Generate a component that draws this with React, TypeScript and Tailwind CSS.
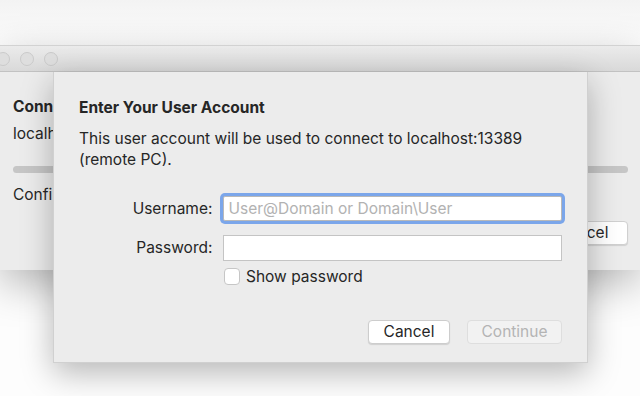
import React from 'react';

const font = { fontFamily: 'Inter, "Noto Sans", sans-serif' };

const Light: React.FC = () => (
  <span className="block w-[14px] h-[14px] rounded-full bg-[#dedede] border border-[#cacaca]" />
);

const App: React.FC = () => {
  return (
    <div
      className="relative w-[640px] h-[396px] overflow-hidden bg-[#fdfdfd] text-[15.5px] text-[#262626]"
      style={font}
    >
      <div className="h-[45px] bg-gradient-to-b from-[#f3f3f3] to-[#fdfdfd]" />

      {/* background window, mostly hidden by the sheet */}
      <div className="shadow-[0_14px_40px_rgba(0,0,0,0.28)]">
        <div className="h-[27px] flex items-center bg-gradient-to-b from-[#ebebeb] to-[#d9d9d9] border-t border-[#d2d2d2] border-b border-b-[#c2c2c2]">
          <div className="flex gap-[10px] -ml-[4px]">
            <Light />
            <Light />
            <Light />
          </div>
        </div>
        <div className="h-[198px] bg-[#ececec] pt-[25px] pl-[13px] pr-[12px] flex flex-col">
          <div className="font-bold leading-[20px]">Conn</div>
          <div className="leading-[20px] mt-[7px]">localh</div>
          <div className="mt-[22px] h-[7px] rounded-full bg-[#c6c6c6]" />
          <div className="leading-[20px] mt-[12px]">Confi</div>
          <div className="flex justify-end mt-[16px]">
            <div className="h-[24px] w-[90px] rounded-[4px] bg-white border border-[#d0d0d0] shadow-[0_1px_1px_rgba(0,0,0,0.12)] flex items-center justify-center">
              Cancel
            </div>
          </div>
        </div>
      </div>

      {/* sheet */}
      <div className="absolute left-[53px] top-[72px] w-[535px] h-[291px] bg-[#ececec] border-x border-b border-[#d0d0d0] shadow-[0_10px_30px_rgba(0,0,0,0.28)] px-[25px] pt-[26px] flex flex-col">
        <div className="font-bold leading-[20px]">Enter Your User Account</div>
        <div className="mt-[10px] leading-[21px]">
          This user account will be used to connect to localhost:13389
          <br />
          (remote PC).
        </div>

        <div className="mt-[26px] flex items-center gap-[11px]">
          <div className="w-[134px] text-right leading-[20px]">Username:</div>
          <div className="w-[340px] h-[25px] bg-white border border-[#b9b9b9] ring-[3px] ring-[#7ba6ea] rounded-[2px] flex items-center px-[4px] text-[#b2b2b2]">
            User@Domain or Domain\User
          </div>
        </div>
        <div className="mt-[14px] flex items-center gap-[11px]">
          <div className="w-[134px] text-right leading-[20px]">Password:</div>
          <div className="w-[340px] h-[26px] bg-white border border-[#c4c4c4]" />
        </div>
        <div className="mt-[7px] ml-[145px] h-[17px] flex items-center gap-[6px]">
          <span className="block w-[16px] h-[17px] rounded-[4px] bg-white border border-[#c6c6c6]" />
          <span className="leading-[17px]">Show password</span>
        </div>

        <div className="mt-auto mb-[18px] flex justify-end gap-[17px]">
          <div className="w-[82px] h-[24px] rounded-[4px] bg-white border border-[#cdcdcd] shadow-[0_1px_1px_rgba(0,0,0,0.12)] flex items-center justify-center">
            Cancel
          </div>
          <div className="w-[95px] h-[24px] rounded-[4px] bg-[#f2f2f2] border border-[#dedede] flex items-center justify-center text-[#b4b4b4]">
            Continue
          </div>
        </div>
      </div>
    </div>
  );
};

export default App;
